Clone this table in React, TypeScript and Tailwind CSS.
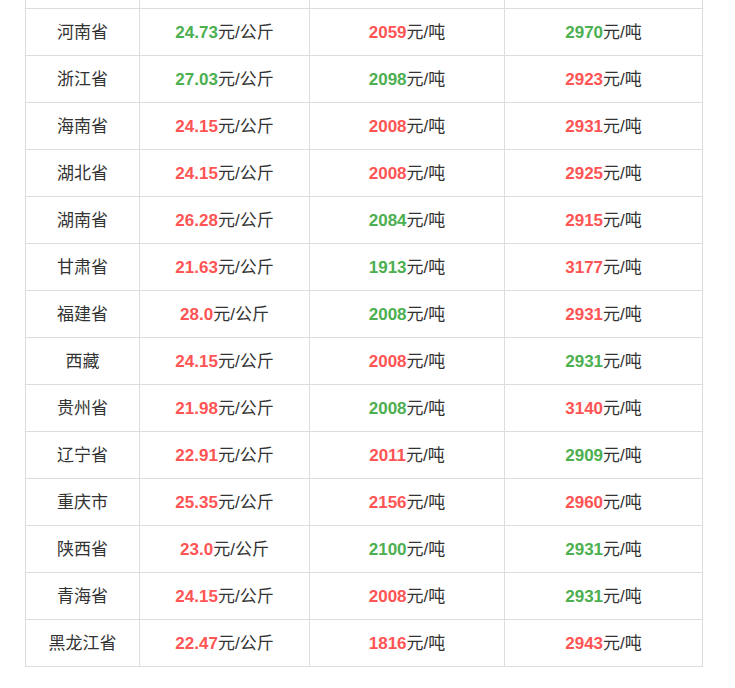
const G = "text-[#4caf50]";
const R = "text-[#ff5454]";

type Row = [string, string, boolean, string, boolean, string, boolean];

// [省份, 汽油价, 涨?, 价1, 涨?, 价2, 涨?] — true = 红
const rows: Row[] = [
  ["河南省", "24.73", false, "2059", true, "2970", false],
  ["浙江省", "27.03", false, "2098", false, "2923", true],
  ["海南省", "24.15", true, "2008", true, "2931", true],
  ["湖北省", "24.15", true, "2008", true, "2925", true],
  ["湖南省", "26.28", true, "2084", false, "2915", true],
  ["甘肃省", "21.63", true, "1913", false, "3177", true],
  ["福建省", "28.0", true, "2008", false, "2931", true],
  ["西藏", "24.15", true, "2008", true, "2931", false],
  ["贵州省", "21.98", true, "2008", false, "3140", true],
  ["辽宁省", "22.91", true, "2011", true, "2909", false],
  ["重庆市", "25.35", true, "2156", true, "2960", true],
  ["陕西省", "23.0", true, "2100", false, "2931", false],
  ["青海省", "24.15", true, "2008", true, "2931", false],
  ["黑龙江省", "22.47", true, "1816", true, "2943", true],
];

function Price({ v, red, unit }: { v: string; red: boolean; unit: string }) {
  return (
    <>
      <span className={`font-bold ${red ? R : G}`}>{v}</span>
      {unit}
    </>
  );
}

export default function App() {
  const cell = "border border-[#dddddd] p-0 pt-[3px] text-center align-middle";
  return (
    <div
      className="h-[688px] w-[735px] overflow-hidden bg-white pl-[25px] text-[17px] leading-[20px] text-[#333333]"
      style={{ fontFamily: '"Liberation Sans", Arial, "Noto Sans CJK SC", sans-serif' }}
    >
      <table className="w-[677px] table-fixed border-collapse">
        <colgroup>
          <col className="w-[114px]" />
          <col className="w-[170px]" />
          <col className="w-[195px]" />
          <col className="w-[198px]" />
        </colgroup>
        <tbody>
          <tr className="h-[8px]">
            <td className="border border-t-0 border-[#dddddd] p-0" />
            <td className="border border-t-0 border-[#dddddd] p-0" />
            <td className="border border-t-0 border-[#dddddd] p-0" />
            <td className="border border-t-0 border-[#dddddd] p-0" />
          </tr>
          {rows.map((r) => (
            <tr key={r[0]} className="h-[47px]">
              <td className={cell}>{r[0]}</td>
              <td className={cell}>
                <Price v={r[1]} red={r[2]} unit="元/公斤" />
              </td>
              <td className={cell}>
                <Price v={r[3]} red={r[4]} unit="元/吨" />
              </td>
              <td className={cell}>
                <Price v={r[5]} red={r[6]} unit="元/吨" />
              </td>
            </tr>
          ))}
        </tbody>
      </table>
    </div>
  );
}
